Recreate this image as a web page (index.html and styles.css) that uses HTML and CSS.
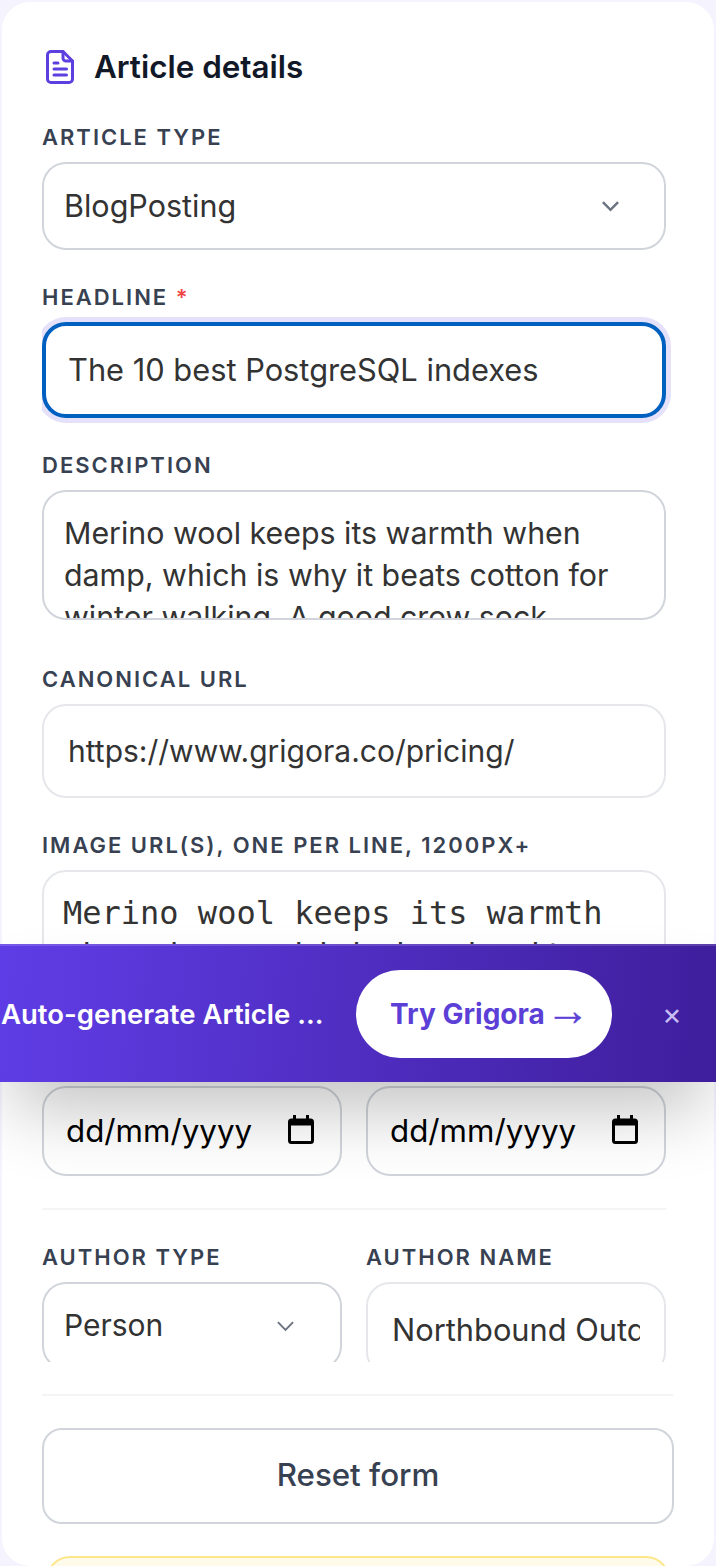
FILE: index.html
```html
<!DOCTYPE html>
<html lang="en">
<head>
  <meta charset="UTF-8">
  <title>Article schema generator</title>
  <meta name="viewport" content="width=device-width, initial-scale=1.0">
  <link rel="stylesheet" href="styles.css">
</head>
<body>

<main class="card">
  <h2 class="card-title">
    <svg class="title-icon" viewBox="0 0 28 34" fill="none" stroke="currentColor" stroke-width="3" stroke-linecap="round" stroke-linejoin="round">
      <path d="M5 1.500h12l9.500 9.500v18a3.500 3.500 0 0 1-3.500 3.500H5A3.500 3.500 0 0 1 1.500 29V5A3.500 3.500 0 0 1 5 1.500z"/>
      <path d="M17 1.500V8a3 3 0 0 0 3 3h6.500"/>
      <path d="M8 13h4M8 19h12.500M8 25h12.500"/>
    </svg>
    Article details
  </h2>

  <!-- Article fields -->
  <div class="field">
    <label class="label">Article type</label>
    <div class="select-box">
      <select class="control select select-wide"><option>BlogPosting</option></select>
      <svg class="chevron" viewBox="0 0 20 12" fill="none" stroke="currentColor" stroke-width="2.600"><path d="M2 2l8 8 8-8"/></svg>
    </div>
  </div>

  <div class="field">
    <label class="label">Headline <span class="required">*</span></label>
    <input class="control input input-focus" type="text" value="The 10 best PostgreSQL indexes">
  </div>

  <div class="field">
    <label class="label">Description</label>
    <textarea class="control textarea" rows="3">Merino wool keeps its warmth when damp, which is why it beats cotton for winter walking. A good crew sock</textarea>
  </div>

  <div class="field field-canonical">
    <label class="label">Canonical URL</label>
    <input class="control input input-light" type="text" value="https://www.grigora.co/pricing/">
  </div>

  <div class="field">
    <label class="label">Image URL(s), one per line, 1200px+</label>
    <textarea class="control textarea textarea-mono" rows="3">Merino wool keeps its warmth when damp, which is why it beats cotton for winter walking.</textarea>
  </div>

  <div class="two-col field-dates">
    <div>
      <label class="label">Date published</label>
      <div class="date-box">
        <input class="control date" type="text" value="dd/mm/yyyy">
        <svg class="calendar" viewBox="0 0 26 29"><path fill-rule="evenodd" d="M5 0h3v3.500h10V0h3v3.500h1.500A3.500 3.500 0 0 1 26 7v18.500a3.500 3.500 0 0 1-3.500 3.500h-19A3.500 3.500 0 0 1 0 25.500V7a3.500 3.500 0 0 1 3.500-3.500H5zM3 10.500v15a.5.5 0 0 0 .5.5h19a.5.5 0 0 0 .5-.5v-15z"/></svg>
      </div>
    </div>
    <div>
      <label class="label">Date modified</label>
      <div class="date-box">
        <input class="control date" type="text" value="dd/mm/yyyy">
        <svg class="calendar" viewBox="0 0 26 29"><path fill-rule="evenodd" d="M5 0h3v3.500h10V0h3v3.500h1.500A3.500 3.500 0 0 1 26 7v18.500a3.500 3.500 0 0 1-3.500 3.500h-19A3.500 3.500 0 0 1 0 25.500V7a3.500 3.500 0 0 1 3.500-3.500H5zM3 10.500v15a.5.5 0 0 0 .5.5h19a.5.5 0 0 0 .5-.5v-15z"/></svg>
      </div>
    </div>
  </div>

  <hr class="rule">

  <!-- Author -->
  <div class="two-col author-row">
    <div>
      <label class="label">Author type</label>
      <div class="clip">
        <div class="select-box">
          <select class="control select"><option>Person</option></select>
          <svg class="chevron chevron-thin" viewBox="0 0 20 12" fill="none" stroke="currentColor" stroke-width="2"><path d="M2 2l8 8 8-8"/></svg>
        </div>
      </div>
    </div>
    <div>
      <label class="label">Author name</label>
      <div class="clip">
        <input class="control input input-light input-author" type="text" value="Northbound Outdoors">
      </div>
    </div>
  </div>

  <hr class="rule rule-wide">

  <button class="reset" type="button">Reset form</button>

  <div class="notice"></div>
</main>

<!-- Promo banner -->
<aside class="promo">
  <span class="promo-text">Auto-generate Article schema on every post</span>
  <a class="promo-btn" href="#">Try Grigora <span class="arrow">→</span></a>
  <span class="promo-close">×</span>
</aside>

</body>
</html>
```

FILE: styles.css
```css
/* Global styles */
html, body {
  height: 1566px;
  overflow: hidden;
}

body {
  margin: 0;
  background: #f5f3fd;
  font-family: Inter, 'Liberation Sans', sans-serif;
  font-optical-sizing: none;
  color: #111827;
  position: relative;
}

.card {
  box-sizing: border-box;
  width: 712px;
  height: 1564px;
  margin: 2px 2px 0;
  padding: 48px 48px 0 40px;
  background: #fff;
  border-radius: 28px;
  overflow: hidden;
}

.card-title {
  display: flex;
  align-items: center;
  gap: 20px;
  margin: 0 0 0 4px;
  height: 34px;
  font-size: 31.4px;
  font-weight: 600;
  line-height: 34px;
  color: #111827;
}

.title-icon {
  width: 28px;
  height: 34px;
  color: #5d3fe0;
  flex: none;
}

/* Fields */
.field {
  margin-top: 33px;
}

.card-title + .field {
  margin-top: 39px;
}

.field-canonical {
  margin-top: 45px;
}

.label {
  display: block;
  height: 28px;
  margin-bottom: 11px;
  font-size: 22px;
  font-weight: 600;
  line-height: 28px;
  letter-spacing: 2px;
  text-transform: uppercase;
  white-space: nowrap;
  color: #374151;
}

.required {
  color: #ef4444;
}

.control {
  display: block;
  box-sizing: border-box;
  width: 100%;
  margin: 0;
  border: 2px solid #d1d5db;
  border-radius: 24px;
  background: #fff;
  font-family: Inter, 'Liberation Sans', sans-serif;
  font-optical-sizing: none;
  font-size: 30px;
  color: #333;
  outline: none;
}

.select-box,
.date-box {
  position: relative;
}

.select {
  height: 88px;
  padding: 0 60px 2px 20px;
  appearance: none;
}

.select-wide {
  font-size: 30.5px;
}

.chevron {
  position: absolute;
  right: 46px;
  top: 38px;
  width: 19px;
  height: 12px;
  color: #6b7280;
}

.chevron-thin {
  right: 47px;
}

.input {
  height: 94px;
  padding: 0 24px;
}

.input-focus {
  height: 96px;
  border: 4px solid #0060c0;
  padding: 0 22px 2px;
  font-size: 30.8px;
  box-shadow: 0 0 0 5px #e6e1fa;
  clip-path: inset(-6px -6px -6px 0);
}

.input-light {
  border-color: #e5e7eb;
}

.input-author {
  font-size: 30.8px;
}

.textarea {
  height: 130px;
  padding: 20px 20px 0;
  font-size: 30.35px;
  line-height: 42px;
  overflow: hidden;
  resize: none;
}

.textarea-mono {
  padding: 20px 19px 0;
  font-family: 'DejaVu Sans Mono', monospace;
  font-size: 32px;
  border-color: #e5e7eb;
}

/* Two column rows */
.two-col {
  display: grid;
  grid-template-columns: 300px 300px;
  gap: 24px;
}

.field-dates {
  margin-top: 47px;
}

.date {
  height: 90px;
  padding: 0 22px;
  color: #000;
  font-size: 31.3px;
}

.calendar {
  position: absolute;
  right: 28px;
  top: 29px;
  width: 26px;
  height: 29px;
  fill: #000;
}

.rule {
  width: 624px;
  margin: 32px 0 0;
  border: 0;
  border-top: 2px solid #f3f4f6;
}

.rule-wide {
  width: 631px;
}

.author-row {
  margin-top: 33px;
}

.clip {
  height: 80px;
  overflow: hidden;
}

.reset {
  display: block;
  box-sizing: border-box;
  width: 632px;
  height: 96px;
  margin-top: 32px;
  padding-bottom: 3px;
  background: #fff;
  border: 2px solid #d1d5db;
  border-radius: 20px;
  font-family: Inter, 'Liberation Sans', sans-serif;
  font-optical-sizing: none;
  font-size: 31.3px;
  font-weight: 450;
  color: #374151;
}

.notice {
  box-sizing: border-box;
  width: 624px;
  height: 60px;
  margin: 32px 0 0 4px;
  background: #fffbeb;
  border: 2px solid #fde68a;
  border-radius: 24px;
}

/* Promo banner */
.promo {
  position: absolute;
  left: 0;
  top: 944px;
  box-sizing: border-box;
  width: 716px;
  height: 138px;
  display: flex;
  align-items: center;
  padding-left: 1px;
  background: linear-gradient(95deg, #5f3de6, #3f1e9c);
  border-top: 2px solid rgba(255, 255, 255, 0.15);
  box-shadow: 0 40px 70px -12px rgba(0, 0, 0, 0.24);
}

.promo-text {
  width: 325px;
  flex: none;
  overflow: hidden;
  white-space: nowrap;
  text-overflow: ellipsis;
  font-size: 27.5px;
  font-weight: 600;
  color: #fff;
}

.promo-btn {
  box-sizing: border-box;
  margin-left: 30px;
  width: 256px;
  height: 88px;
  padding-left: 34px;
  flex: none;
  display: flex;
  align-items: center;
  gap: 1px;
  background: #fff;
  border-radius: 44px;
  font-size: 28px;
  font-weight: 700;
  color: #5b3fd6;
  text-decoration: none;
}

.arrow {
  padding-bottom: 8px;
  font-family: 'Liberation Sans', sans-serif;
  font-size: 44px;
  line-height: 1;
  -webkit-text-stroke: 0.3px #5b3fd6;
}

.promo-close {
  margin-left: 50px;
  font-size: 30px;
  color: #c9bdf5;
}
```
